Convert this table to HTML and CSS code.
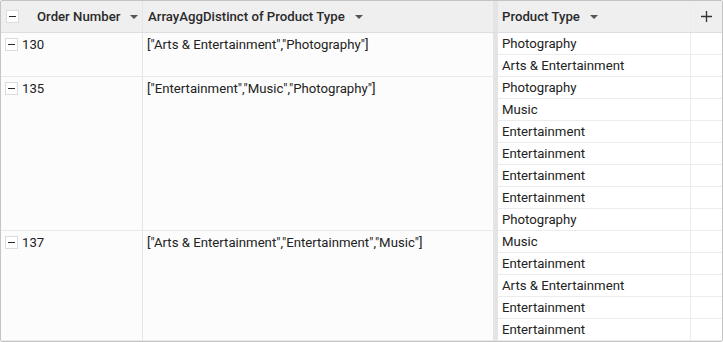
FILE: index.html
```html
<!DOCTYPE html>
<html>
<head>
<meta charset="utf-8">
<link rel="stylesheet" href="styles.css">
</head>
<body>
<div class="table">
  <div class="head">
    <div class="c1 hcell"><span class="tog"><i></i></span><span class="ht">Order Number</span><span class="caret"></span></div>
    <div class="c2 hcell"><span class="ht">ArrayAggDistinct of Product Type</span><span class="caret"></span></div>
    <div class="c3 hcell"><span class="ht">Product Type</span><span class="caret"></span></div>
    <div class="c4 hcell plus"><svg width="11" height="11" viewBox="0 0 11 11"><path d="M5.5 0v11M0 5.5h11" stroke="#333" stroke-width="1.3"/></svg></div>
  </div>
  <div class="group">
    <div class="c1 gcell"><span class="tog"><i></i></span>130</div>
    <div class="c2 gcell">["Arts &amp; Entertainment","Photography"]</div>
    <div class="c3 stack"><div class="cell">Photography</div><div class="cell">Arts &amp; Entertainment</div></div>
    <div class="c4 stack"><div class="cell"></div><div class="cell"></div></div>
  </div>
  <div class="group">
    <div class="c1 gcell"><span class="tog"><i></i></span>135</div>
    <div class="c2 gcell">["Entertainment","Music","Photography"]</div>
    <div class="c3 stack"><div class="cell">Photography</div><div class="cell">Music</div><div class="cell">Entertainment</div><div class="cell">Entertainment</div><div class="cell">Entertainment</div><div class="cell">Entertainment</div><div class="cell">Photography</div></div>
    <div class="c4 stack"><div class="cell"></div><div class="cell"></div><div class="cell"></div><div class="cell"></div><div class="cell"></div><div class="cell"></div><div class="cell"></div></div>
  </div>
  <div class="group">
    <div class="c1 gcell"><span class="tog"><i></i></span>137</div>
    <div class="c2 gcell">["Arts &amp; Entertainment","Entertainment","Music"]</div>
    <div class="c3 stack"><div class="cell">Music</div><div class="cell">Entertainment</div><div class="cell">Arts &amp; Entertainment</div><div class="cell">Entertainment</div><div class="cell">Entertainment</div></div>
    <div class="c4 stack"><div class="cell"></div><div class="cell"></div><div class="cell"></div><div class="cell"></div><div class="cell"></div></div>
  </div>
</div>
</body>
</html>
```
FILE: styles.css
```css
* { box-sizing: border-box; }
html, body { margin: 0; padding: 0; background: #fff; }
body { font-family: Roboto, "Liberation Sans", sans-serif; font-size: 13.2px; color: #222; }
.table {
  width: 723px; height: 342px; overflow: hidden;
  border: 1px solid #c4c4c4; border-radius: 2px;
  background: #fcfcfc;
}
.head {
  display: flex; height: 32px; background: #efefef;
  border-bottom: 1px solid #dedede;
}
.c1 { width: 142px; flex: none; border-right: 1px solid #e6e6e6; }
.c2 { width: 355px; flex: none; border-right: 5px solid #e4e4e4; }
.c3 { width: 193px; flex: none; border-right: 1px solid #ececec; }
.c4 { flex: 1; }
.hcell { display: flex; align-items: center; font-weight: 500; color: #2a2a2a; }
.head .c1 { padding-left: 5px; }
.head .c1 .tog { margin-right: 18px; }
.head .c2 { padding-left: 5px; }
.head .c3 { padding-left: 4px; }
.head .c4 { border-right: none; }
.ht { white-space: nowrap; }
.caret {
  width: 0; height: 0; margin-left: 10px;
  border-left: 4px solid transparent; border-right: 4px solid transparent;
  border-top: 4px solid #555;
}
.plus { justify-content: center; padding-right: 1px; }
.plus svg { display: block; }
.tog {
  width: 13px; height: 13px; background: #fff; border: 1px solid #dcdcdc;
  display: inline-flex; align-items: center; justify-content: center; flex: none;
}
.tog i { display: block; width: 7px; height: 1.6px; background: #2a2a2a; }
.group { display: flex; }
.gcell { display: flex; align-items: flex-start; padding-top: 5px; line-height: 14px; white-space: nowrap; border-bottom: 1px solid #e8e8e8; }
.group .c1 { padding-left: 4px; }
.group .c1 .tog { margin-right: 4px; margin-top: 0; }
.group .c2 { padding-left: 4px; }
.stack { display: flex; flex-direction: column; }
.cell { height: 22px; line-height: 22px; padding-left: 4px; border-bottom: 1px solid #ececec; white-space: nowrap; }
.group .c3 { background: #fff; }
.group .c4 { background: #fff; }
```
